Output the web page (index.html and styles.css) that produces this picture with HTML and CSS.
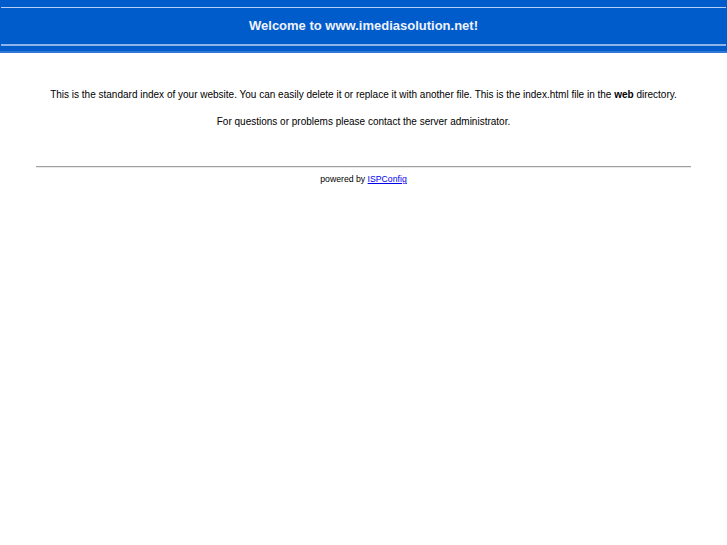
FILE: index.html
```html
<!DOCTYPE html>
<html>
<head>
<meta charset="utf-8">
<title>Welcome to www.imediasolution.net!</title>
<link rel="stylesheet" href="styles.css">
</head>
<body>
<div class="header">
  <div class="line-top"></div>
  <div class="title">Welcome to www.imediasolution.net!</div>
  <div class="line-bottom"></div>
</div>
<div class="content">
  <p class="p1">This is the standard index of your website. You can easily delete it or replace it with another file. This is the index.html file in the <b>web</b> directory.</p>
  <p class="p2">For questions or problems please contact the server administrator.</p>
  <hr class="rule">
  <p class="powered">powered by <a href="#">ISPConfig</a></p>
</div>
</body>
</html>
```
FILE: styles.css
```css
html, body {
  margin: 0;
  padding: 0;
  background: #ffffff;
}
body {
  font-family: "Liberation Sans", Arial, sans-serif;
  color: #000;
}
.header {
  background: #005bcb;
  padding-top: 7px;
  height: 44px;
  border-bottom: 2px solid #2f78da;
}
.line-top {
  height: 1px;
  margin: 0 1px;
  background: #b7cdf2;
}
.title {
  box-sizing: border-box;
  height: 36px;
  padding-bottom: 2px;
  display: flex;
  align-items: center;
  justify-content: center;
  color: #eef2fc;
  font-weight: bold;
  font-size: 13px;
}
.line-bottom {
  height: 2px;
  margin: 0 1px;
  background: #8eb2ea;
}
.content {
  text-align: center;
  font-size: 10px;
}
.p1 {
  margin: 35px 0 0;
  line-height: 14px;
}
.p2 {
  margin: 13px 0 0;
  line-height: 14px;
}
.rule {
  width: 90%;
  margin: 37px auto 0;
  border: 0;
  height: 0;
  border-top: 1px solid #a0a0a0;
  border-bottom: 1px solid #e8e8e8;
}
.powered {
  margin: 5px 0 0;
  font-size: 8.7px;
  line-height: 12px;
}
.powered a {
  color: #0000ee;
}
```
